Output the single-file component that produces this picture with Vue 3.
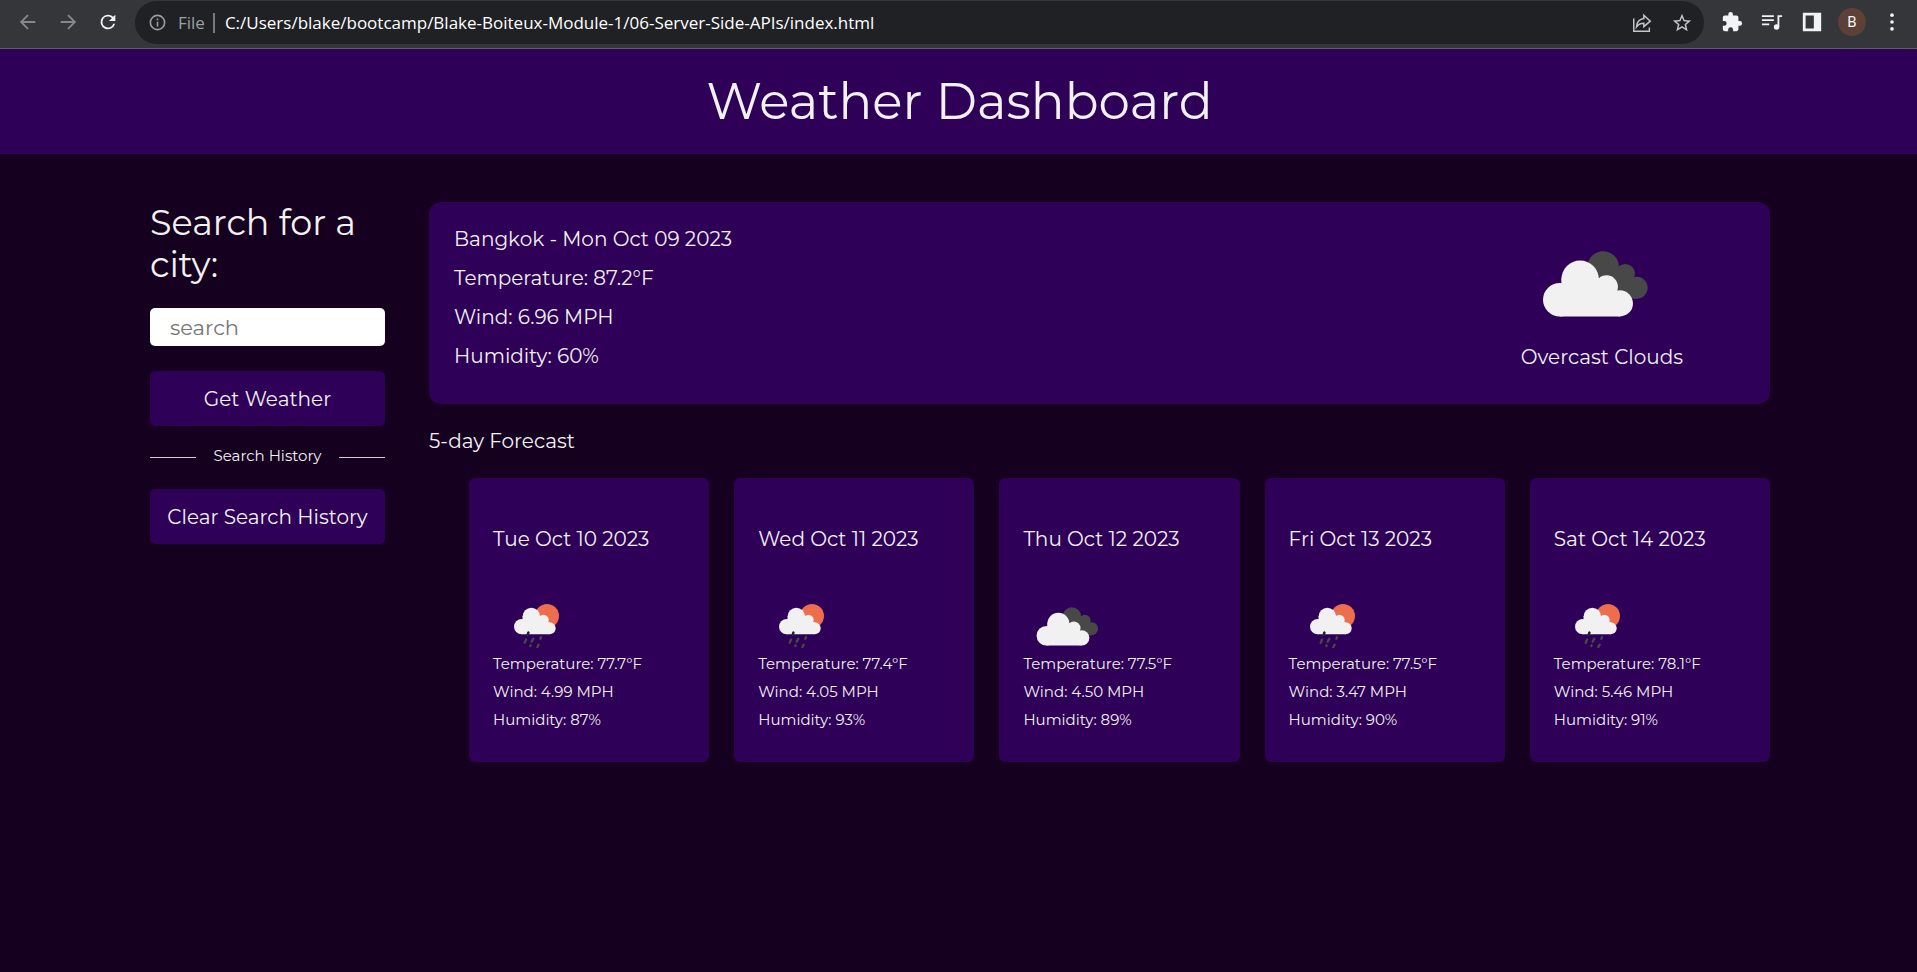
<script setup>
import { ref } from 'vue'

const city = ref('')

const current = {
  title: 'Bangkok - Mon Oct 09 2023',
  lines: ['Temperature: 87.2°F', 'Wind: 6.96 MPH', 'Humidity: 60%'],
  description: 'Overcast Clouds',
}

const forecast = [
  { date: 'Tue Oct 10 2023', icon: 'rain', temp: '77.7', wind: '4.99', humidity: 87 },
  { date: 'Wed Oct 11 2023', icon: 'rain', temp: '77.4', wind: '4.05', humidity: 93 },
  { date: 'Thu Oct 12 2023', icon: 'clouds', temp: '77.5', wind: '4.50', humidity: 89 },
  { date: 'Fri Oct 13 2023', icon: 'rain', temp: '77.5', wind: '3.47', humidity: 90 },
  { date: 'Sat Oct 14 2023', icon: 'rain', temp: '78.1', wind: '5.46', humidity: 91 },
]
</script>

<template>
  <div class="window">
    <nav class="toolbar" aria-label="Browser">
      <button class="tool dim" type="button" aria-label="Back">
        <svg viewBox="0 0 24 24" fill="none" stroke="currentColor" stroke-width="2"><path d="M20 12H5M12 4.500 4.500 12l7.500 7.500" /></svg>
      </button>
      <button class="tool dim" type="button" aria-label="Forward">
        <svg viewBox="0 0 24 24" fill="none" stroke="currentColor" stroke-width="2"><path d="M4 12h15M12 4.500l7.500 7.500-7.500 7.500" /></svg>
      </button>
      <button class="tool" type="button" aria-label="Reload">
        <svg viewBox="0 0 24 24" fill="currentColor"><path d="M17.650 6.350A8 8 0 1 0 19.730 14h-2.080A6 6 0 1 1 12 6c1.660 0 3.140.690 4.220 1.780L13 11h7V4z" /></svg>
      </button>
      <div class="address">
        <svg class="info" viewBox="0 0 24 24" fill="currentColor"><path d="M11 7h2v2h-2zm0 4h2v6h-2zm1-9a10 10 0 1 0 0 20 10 10 0 0 0 0-20zm0 18a8 8 0 1 1 0-16 8 8 0 0 1 0 16z" /></svg>
        <span class="scheme">File</span>
        <span class="bar"></span>
        <span class="url">C:/Users/blake/bootcamp/Blake-Boiteux-Module-1/06-Server-Side-APIs/index.html</span>
        <button class="tool soft" type="button" aria-label="Share">
          <svg viewBox="0 0 24 24" fill="none" stroke="currentColor" stroke-width="1.600"><path d="M3 7v14h17v-4M14 3.500l7 6.500-7 6v-3.800c-3.500 0-6 1-8 4 .4-5 3.200-8.400 8-9z" /></svg>
        </button>
        <button class="tool soft" type="button" aria-label="Bookmark">
          <svg viewBox="0 0 24 24" fill="currentColor"><path d="M22 9.240l-7.190-.620L12 2 9.190 8.630 2 9.240l5.460 4.730L5.820 21 12 17.270 18.180 21l-1.630-7.030zM12 15.400l-3.760 2.270 1-4.280-3.320-2.880 4.380-.380L12 6.100l1.710 4.040 4.380.380-3.320 2.880 1 4.280z" /></svg>
        </button>
      </div>
      <div class="tools">
        <button class="tool" type="button" aria-label="Extensions">
          <svg viewBox="0 0 24 24" fill="currentColor"><path d="M20.500 11H19V7a2 2 0 0 0-2-2h-4V3.500a2.500 2.500 0 0 0-5 0V5H4a2 2 0 0 0-2 2v3.800h1.500a2.700 2.700 0 0 1 0 5.400H2V20a2 2 0 0 0 2 2h3.800v-1.500a2.700 2.700 0 0 1 5.400 0V22H17a2 2 0 0 0 2-2v-4h1.500a2.500 2.500 0 0 0 0-5z" /></svg>
        </button>
        <button class="tool" type="button" aria-label="Media controls">
          <svg viewBox="0 0 24 24"><path d="M1 5.500h13M1 10h13M1 14.500h8M19 17V5.500h4" fill="none" stroke="currentColor" stroke-width="2" /><circle cx="17" cy="17.500" r="3" fill="currentColor" /></svg>
        </button>
        <button class="tool" type="button" aria-label="Side panel">
          <svg viewBox="0 0 24 24" fill="currentColor" fill-rule="evenodd"><path d="M2 2h20v20H2zM5 5v14h9V5z" /></svg>
        </button>
        <button class="avatar" type="button" aria-label="Profile">B</button>
        <button class="tool" type="button" aria-label="Menu">
          <svg viewBox="0 0 24 24" fill="currentColor"><circle cx="12" cy="4.500" r="2" /><circle cx="12" cy="12" r="2" /><circle cx="12" cy="19.500" r="2" /></svg>
        </button>
      </div>
    </nav>

    <header class="banner"><h1>Weather Dashboard</h1></header>

    <main class="page">
      <aside>
        <form @submit.prevent>
          <h2><label for="city">Search for a city:</label></h2>
          <input id="city" v-model="city" type="text" placeholder="search" />
          <button class="action" type="submit">Get Weather</button>
        </form>
        <div class="history">Search History</div>
        <button class="action" type="button">Clear Search History</button>
      </aside>

      <div class="weather">
        <section class="current">
          <div>
            <p>{{ current.title }}</p>
            <p v-for="line in current.lines" :key="line">{{ line }}</p>
          </div>
          <figure>
            <svg class="cloud" viewBox="190 182 314 196" aria-hidden="true">
              <g fill="#484848"><circle cx="370" cy="229" r="47" /><circle cx="436" cy="249" r="29" /><circle cx="470" cy="291" r="33" /><path d="M350 230h80l40 94H380z" /></g>
              <g fill="#f1f1f1"><circle cx="240" cy="327" r="50" /><circle cx="301" cy="266" r="56" /><circle cx="380" cy="288" r="34" /><circle cx="420" cy="338" r="39" /><path d="M246 262h111l30 30 33 85H240z" /></g>
            </svg>
            <figcaption>{{ current.description }}</figcaption>
          </figure>
        </section>

        <h3>5-day Forecast</h3>
        <section class="days">
          <article v-for="day in forecast" :key="day.date">
            <h4>{{ day.date }}</h4>
            <svg v-if="day.icon === 'rain'" class="icon" viewBox="99 390 264 168" aria-hidden="true">
              <circle cx="261" cy="438" r="36" fill="#ec6e4c" />
              <g fill="#f1f1f1"><circle cx="185" cy="470" r="23" /><circle cx="214" cy="439" r="26" /><circle cx="250" cy="450" r="16" /><circle cx="269" cy="475" r="18" /><path d="M188 438h52l29 20v35H185z" /></g>
              <path d="M205 488l-2 5M198 509l-4 9M220 506l-5 9M243 502l-2 4M212 526l-1 2M236 524l-4 7" fill="none" stroke="#484848" stroke-width="7" stroke-linecap="round" />
              <path d="M205 488l-1 4" stroke="#222" stroke-width="7" stroke-linecap="round" />
            </svg>
            <svg v-else class="icon" viewBox="121 145 448 285" aria-hidden="true">
              <g fill="#484848"><circle cx="370" cy="229" r="47" /><circle cx="436" cy="249" r="29" /><circle cx="470" cy="291" r="33" /><path d="M350 230h80l40 94H380z" /></g>
              <g fill="#f1f1f1"><circle cx="240" cy="327" r="50" /><circle cx="301" cy="266" r="56" /><circle cx="380" cy="288" r="34" /><circle cx="420" cy="338" r="39" /><path d="M246 262h111l30 30 33 85H240z" /></g>
            </svg>
            <p>Temperature: {{ day.temp }}°F</p>
            <p>Wind: {{ day.wind }} MPH</p>
            <p>Humidity: {{ day.humidity }}%</p>
          </article>
        </section>
      </div>
    </main>
  </div>
</template>

<style>
body {
  margin: 0;
  background: #160020;
}
</style>

<style scoped>
* {
  box-sizing: border-box;
}

.window {
  min-height: 100vh;
  background: #160020;
  color: #f1f1f1;
  font-family: Montserrat, Inter, sans-serif;
  font-size: 20px;
  line-height: 24px;
}

h1, h2, h3, h4, p, figure {
  margin: 0;
  font-weight: 400;
}

button {
  border: 0;
  padding: 0;
  background: none;
  color: inherit;
  font: inherit;
  cursor: pointer;
}

.toolbar {
  display: flex;
  align-items: flex-start;
  height: 49px;
  padding: 1px 5px 0 8px;
  background: #35363a;
  border-bottom: 1px solid #5f6163;
  color: #f1f3f4;
}

.tool {
  display: grid;
  place-items: center;
  width: 40px;
  height: 42px;
}

.tool svg {
  width: 22px;
  height: 22px;
}

.dim {
  color: #87888b;
}

.soft {
  color: #c4c7c9;
}

.address {
  display: flex;
  flex: 1;
  align-items: center;
  height: 43px;
  margin-left: 7px;
  padding: 0 2px 0 13px;
  border-radius: 22px;
  background: #202124;
  font-family: "Segoe UI", "Open Sans", sans-serif;
  font-size: 17px;
}

.info {
  width: 19px;
  height: 19px;
  color: #9aa0a6;
}

.scheme {
  margin-left: 11px;
  color: #9aa0a6;
}

.bar {
  width: 2px;
  height: 20px;
  margin: 0 10px 0 8px;
  background: #77797d;
}

.url {
  flex: 1;
  color: #fff;
  white-space: nowrap;
}

.tools {
  display: flex;
  margin-left: 8px;
}

.avatar {
  width: 28px;
  height: 28px;
  margin: 7px 6px;
  border-radius: 50%;
  background: #5d4037;
  font-family: Roboto, sans-serif;
  font-size: 15px;
}

.banner {
  display: grid;
  place-items: center;
  height: 105px;
  padding-left: 2px;
  background: #2e0057;
}

h1 {
  font-size: 50px;
  line-height: 60px;
}

.page {
  display: grid;
  grid-template-columns: 235px 1fr;
  gap: 44px;
  padding: 48px 147px 48px 150px;
}

h2 {
  font-size: 35px;
  line-height: 42px;
}

input {
  display: block;
  width: 100%;
  height: 38px;
  margin: 22px 0 25px;
  padding: 0 20px;
  border: 0;
  border-radius: 5px;
  background: #fff;
  color: #222;
  font: inherit;
  font-size: 21px;
}

input::placeholder {
  color: #757575;
  opacity: 1;
}

.action {
  display: block;
  width: 100%;
  height: 55px;
  border-radius: 5px;
  background: #2e0057;
}

.history {
  display: flex;
  align-items: center;
  gap: 18px;
  height: 63px;
  padding-bottom: 4px;
  font-size: 15px;
  white-space: nowrap;
}

.history::before,
.history::after {
  flex: 1;
  height: 1px;
  margin-top: 4px;
  background: #d1ccd3;
  content: "";
}

.current {
  display: flex;
  justify-content: space-between;
  height: 202px;
  padding: 18px 87px 0 25px;
  border-radius: 12px;
  background: #2e0057;
}

.current p {
  line-height: 39px;
}

figure {
  display: flex;
  flex-direction: column;
  align-items: center;
  padding-top: 31px;
}

.cloud {
  width: 105px;
  height: 66px;
  margin-right: 12px;
}

figcaption {
  margin-top: 28px;
}

h3 {
  margin: 25px 0;
  font-size: 20px;
}

.days {
  display: grid;
  grid-template-columns: repeat(5, 1fr);
  gap: 25px;
  margin-left: 40px;
}

article {
  height: 284px;
  padding: 49px 24px 0;
  border-radius: 6px;
  background: #2e0057;
  font-size: 15px;
}

h4 {
  font-size: 20px;
}

.icon {
  display: block;
  width: 88px;
  height: 56px;
  margin: 49px 0 -6px;
}

article p {
  line-height: 28px;
}
</style>
